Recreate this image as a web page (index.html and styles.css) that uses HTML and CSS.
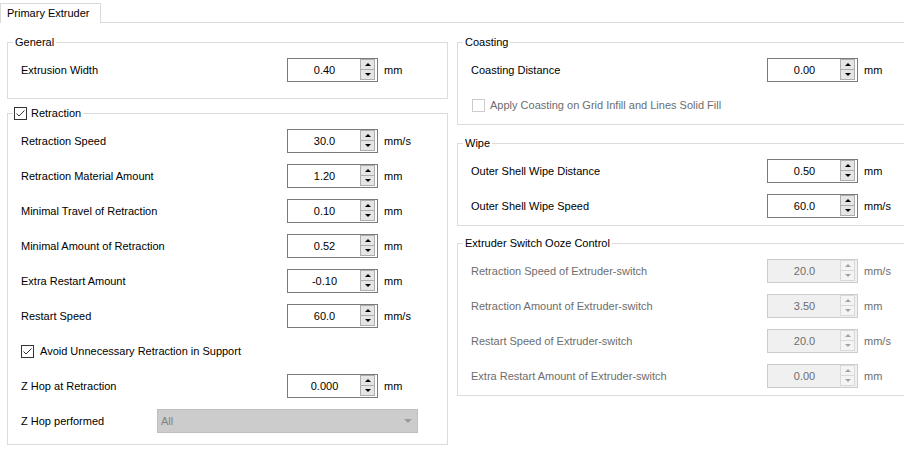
FILE: index.html
```html
<!DOCTYPE html>
<html>
<head>
<meta charset="utf-8">
<link rel="stylesheet" href="styles.css">
</head>
<body>
<div class="tabbar"><div class="tab">Primary Extruder</div></div>
<div class="pane">
  <div class="col col-left">
    <fieldset class="group g-general">
      <legend>General</legend>
      <div class="body">
        <div class="row"><span class="lbl">Extrusion Width</span><div class="spin"><span class="val">0.40</span><span class="btns"><span class="up"></span><span class="dn"></span></span></div><span class="unit">mm</span></div>
      </div>
    </fieldset>
    <fieldset class="group g-retraction">
      <legend class="chk-legend"><span class="cb"><svg width="13" height="13" viewBox="0 0 13 13"><rect x="0.5" y="0.5" width="12" height="12" fill="#fff" stroke="#333"/><polyline points="2.5,6.5 5,9 10.5,3.5" fill="none" stroke="#333" stroke-width="1"/></svg></span>Retraction</legend>
      <div class="body">
        <div class="row"><span class="lbl">Retraction Speed</span><div class="spin"><span class="val">30.0</span><span class="btns"><span class="up"></span><span class="dn"></span></span></div><span class="unit">mm/s</span></div>
        <div class="row"><span class="lbl">Retraction Material Amount</span><div class="spin"><span class="val">1.20</span><span class="btns"><span class="up"></span><span class="dn"></span></span></div><span class="unit">mm</span></div>
        <div class="row"><span class="lbl">Minimal Travel of Retraction</span><div class="spin"><span class="val">0.10</span><span class="btns"><span class="up"></span><span class="dn"></span></span></div><span class="unit">mm</span></div>
        <div class="row"><span class="lbl">Minimal Amount of Retraction</span><div class="spin"><span class="val">0.52</span><span class="btns"><span class="up"></span><span class="dn"></span></span></div><span class="unit">mm</span></div>
        <div class="row"><span class="lbl">Extra Restart Amount</span><div class="spin"><span class="val">-0.10</span><span class="btns"><span class="up"></span><span class="dn"></span></span></div><span class="unit">mm</span></div>
        <div class="row"><span class="lbl">Restart Speed</span><div class="spin"><span class="val">60.0</span><span class="btns"><span class="up"></span><span class="dn"></span></span></div><span class="unit">mm/s</span></div>
        <div class="row"><span class="cb"><svg width="13" height="13" viewBox="0 0 13 13"><rect x="0.5" y="0.5" width="12" height="12" fill="#fff" stroke="#333"/><polyline points="2.5,6.5 5,9 10.5,3.5" fill="none" stroke="#333" stroke-width="1"/></svg></span><span class="lbl">Avoid Unnecessary Retraction in Support</span></div>
        <div class="row"><span class="lbl">Z Hop at Retraction</span><div class="spin"><span class="val">0.000</span><span class="btns"><span class="up"></span><span class="dn"></span></span></div><span class="unit">mm</span></div>
        <div class="row"><span class="lbl lbl-fixed">Z Hop performed</span><div class="combo"><span class="combo-val">All</span><span class="combo-arrow"></span></div></div>
      </div>
    </fieldset>
  </div>
  <div class="col col-right">
    <fieldset class="group g-coasting">
      <legend>Coasting</legend>
      <div class="body">
        <div class="row"><span class="lbl">Coasting Distance</span><div class="spin"><span class="val">0.00</span><span class="btns"><span class="up"></span><span class="dn"></span></span></div><span class="unit">mm</span></div>
        <div class="row disabled"><span class="cb"><svg width="13" height="13" viewBox="0 0 13 13"><rect x="0.5" y="0.5" width="12" height="12" fill="#fff" stroke="#cccccc"/></svg></span><span class="lbl">Apply Coasting on Grid Infill and Lines Solid Fill</span></div>
      </div>
    </fieldset>
    <fieldset class="group g-wipe">
      <legend>Wipe</legend>
      <div class="body">
        <div class="row"><span class="lbl">Outer Shell Wipe Distance</span><div class="spin"><span class="val">0.50</span><span class="btns"><span class="up"></span><span class="dn"></span></span></div><span class="unit">mm</span></div>
        <div class="row"><span class="lbl">Outer Shell Wipe Speed</span><div class="spin"><span class="val">60.0</span><span class="btns"><span class="up"></span><span class="dn"></span></span></div><span class="unit">mm/s</span></div>
      </div>
    </fieldset>
    <fieldset class="group g-ooze">
      <legend>Extruder Switch Ooze Control</legend>
      <div class="body">
        <div class="row disabled"><span class="lbl">Retraction Speed of Extruder-switch</span><div class="spin"><span class="val">20.0</span><span class="btns"><span class="up"></span><span class="dn"></span></span></div><span class="unit">mm/s</span></div>
        <div class="row disabled"><span class="lbl">Retraction Amount of Extruder-switch</span><div class="spin"><span class="val">3.50</span><span class="btns"><span class="up"></span><span class="dn"></span></span></div><span class="unit">mm</span></div>
        <div class="row disabled"><span class="lbl">Restart Speed of Extruder-switch</span><div class="spin"><span class="val">20.0</span><span class="btns"><span class="up"></span><span class="dn"></span></span></div><span class="unit">mm/s</span></div>
        <div class="row disabled"><span class="lbl">Extra Restart Amount of Extruder-switch</span><div class="spin"><span class="val">0.00</span><span class="btns"><span class="up"></span><span class="dn"></span></span></div><span class="unit">mm</span></div>
      </div>
    </fieldset>
  </div>
</div>
</body>
</html>
```
FILE: styles.css
```css
html, body {
  margin: 0;
  padding: 0;
  background: #ffffff;
}
body {
  width: 904px;
  height: 451px;
  overflow: hidden;
  font-family: "Liberation Sans", Arial, sans-serif;
  font-size: 11px;
  line-height: 14px;
  color: #000;
}
.tabbar {
  display: flex;
  align-items: flex-start;
  height: 22px;
  border-bottom: 1px solid #d9d9d9;
}
.tab {
  margin-top: 3px;
  height: 19px;
  padding: 0 6px 0 6px;
  width: 87px;
  border: 1px solid #d9d9d9;
  border-bottom: none;
  background: #fff;
  line-height: 19px;
}
.pane {
  display: flex;
  align-items: flex-start;
  overflow: hidden;
  width: 904px;
}
.col {
  display: flex;
  flex-direction: column;
  flex-shrink: 0;
}
.col-left {
  margin-left: 7px;
  width: 441px;
}
.col-right {
  margin-left: 9px;
  width: 471px;
}
.group {
  margin: 0;
  padding: 0;
  border: 1px solid #dcdcdc;
  min-width: 0;
}
.group legend {
  margin-left: 5px;
  padding: 0 2px;
  line-height: 14px;
  height: 14px;
}
.chk-legend {
  display: flex;
  align-items: center;
}
.chk-legend .cb {
  margin-left: -1px;
  margin-right: 4px;
}
.body {
  padding: 9px 13px 0 13px;
}
.g-general { margin-top: 12px; }
.g-general .body { padding-bottom: 16px; }
.g-retraction { margin-top: 7px; }
.g-retraction .body { padding-bottom: 11px; }
.g-coasting { margin-top: 12px; }
.g-coasting .body { padding-bottom: 7px; }
.g-wipe { margin-top: 11px; }
.g-wipe .body { padding-bottom: 7px; }
.g-ooze { margin-top: 10px; }
.g-ooze .body { padding-bottom: 7px; }

.row {
  display: flex;
  align-items: center;
  height: 24px;
}
.row + .row {
  margin-top: 11px;
}
.lbl {
  flex: 1;
  white-space: nowrap;
}
.lbl-fixed {
  flex: 0 0 136px;
}
.cb {
  display: flex;
  width: 13px;
  height: 13px;
  margin-right: 6px;
}
.cb svg { display: block; }
.disabled .lbl { color: #6d6d6d; }
.disabled .cb { margin-left: 1px; margin-right: 5px; }

.spin {
  display: flex;
  width: 91px;
  height: 24px;
  box-sizing: border-box;
  border: 1px solid #7a7a7a;
  background: #fff;
}
.val {
  flex: 1;
  text-align: center;
  line-height: 22px;
  padding-left: 1px;
}
.btns {
  display: flex;
  flex-direction: column;
  width: 15px;
  margin: 0 2px 1px 0;
}
.up, .dn {
  flex: 1;
  display: flex;
  align-items: center;
  justify-content: center;
  border: 1px solid #adadad;
  background: #e5e5e5;
}
.up { border-bottom: none; margin-top: 0; }
.up::after {
  content: "";
  width: 0;
  height: 0;
  border-left: 3px solid transparent;
  border-right: 3px solid transparent;
  border-bottom: 3px solid #000;
}
.dn::after {
  content: "";
  width: 0;
  height: 0;
  border-left: 3px solid transparent;
  border-right: 3px solid transparent;
  border-top: 3px solid #000;
}
.unit {
  width: 50px;
  margin-left: 6px;
}
.disabled .spin {
  border-color: #cccccc;
  background: #f0f0f0;
  color: #6d6d6d;
}
.disabled .up, .disabled .dn {
  border-color: #d9d9d9;
  background: #f4f4f4;
}
.disabled .up::after { border-bottom-color: #a3a3a3; }
.disabled .dn::after { border-top-color: #a3a3a3; }
.disabled .unit { color: #6d6d6d; }

.combo {
  display: flex;
  align-items: center;
  width: 261px;
  height: 24px;
  box-sizing: border-box;
  border: 1px solid #bfbfbf;
  background: #cccccc;
}
.combo-val {
  flex: 1;
  padding-left: 3px;
  color: #838383;
}
.combo-arrow {
  width: 0;
  height: 0;
  margin-right: 5px;
  border-left: 4px solid transparent;
  border-right: 4px solid transparent;
  border-top: 4px solid #9a9a9a;
}
```
